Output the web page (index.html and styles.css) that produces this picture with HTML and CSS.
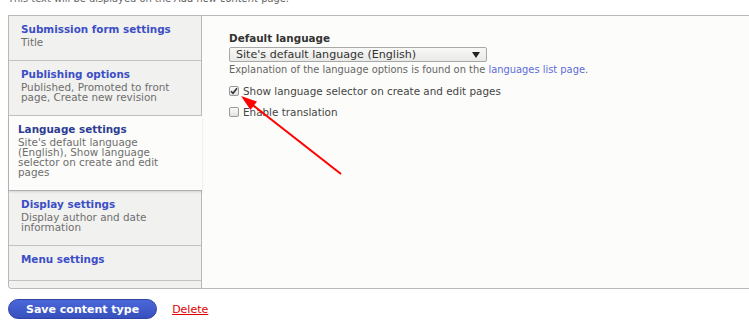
FILE: index.html
```html
<!DOCTYPE html>
<html lang="en">
<head>
    <meta charset="UTF-8">
    <meta name="viewport" content="width=device-width, initial-scale=1.0">
    <title>Edit content type</title>
    <link rel="stylesheet" href="styles.css">
</head>
<body>
    <p class="type-help">This text will be displayed on the <em>Add new content</em> page.</p>

    <!-- Vertical tabs -->
    <div class="vertical-tabs">
        <ul class="tab-list">
            <li class="tab">
                <a href="#"><strong>Submission form settings</strong><span class="summary">Title</span></a>
            </li>
            <li class="tab">
                <a href="#"><strong>Publishing options</strong><span class="summary">Published, Promoted to front page, Create new revision</span></a>
            </li>
            <li class="tab selected">
                <a href="#"><strong>Language settings</strong><span class="summary">Site's default language (English), Show language selector on create and edit pages</span></a>
            </li>
            <li class="tab">
                <a href="#"><strong>Display settings</strong><span class="summary">Display author and date information</span></a>
            </li>
            <li class="tab">
                <a href="#"><strong>Menu settings</strong></a>
            </li>
        </ul>

        <div class="tab-pane">
            <div class="field-label">Default language</div>
            <div class="select">
                <span>Site's default language (English)</span>
                <span class="select-arrow"></span>
            </div>
            <div class="description">Explanation of the language options is found on the <a href="#">languages list page</a>.</div>

            <div class="checkbox-row">
                <span class="check">
                    <svg width="8" height="8" viewBox="0 0 8 8"><path d="M1 4.2 L3 6.3 L7 1.2" fill="none" stroke="#333" stroke-width="1.6"/></svg>
                </span>
                <span>Show language selector on create and edit pages</span>
            </div>
            <div class="checkbox-row second">
                <span class="check"></span>
                <span>Enable translation</span>
            </div>
        </div>
    </div>

    <div class="actions">
        <button class="button-primary">Save content type</button>
        <a href="#" class="delete-link">Delete</a>
    </div>

    <!-- red annotation arrow drawn over the page -->
    <svg class="annotation" width="749" height="332" viewBox="0 0 749 332">
        <line x1="252" y1="104.5" x2="341" y2="174" stroke="#ff0000" stroke-width="2"/>
        <polygon points="241,96 257,101.5 250.5,110" fill="#ff0000"/>
    </svg>
</body>
</html>
```

FILE: styles.css
```css
body {
    margin: 0;
    padding: 0 8px;
    background-color: #fff;
    font-family: "DejaVu Sans", sans-serif;
    font-size: 10.4px;
    color: #333;
    position: relative;
    overflow: hidden;
    height: 332px;
}

.type-help {
    margin: -8px 0 9px 0;
    font-size: 9.9px;
    line-height: 14px;
    color: #666;
    white-space: nowrap;
}

/* Vertical tabs */
.vertical-tabs {
    display: flex;
    width: 770px;
    border: 1px solid #b8b8b8;
    border-right: none;
    border-bottom-left-radius: 4px;
}

.tab-list {
    list-style: none;
    margin: 0;
    padding: 0 0 7px 0;
    width: 192px;
    flex-shrink: 0;
    background-color: #f1f1ef;
    border-bottom-left-radius: 4px;
}

.tab {
    border-bottom: 1px solid #c2c2c0;
}

.tab a {
    display: block;
    padding: 5px 12px 13px 12px;
    text-decoration: none;
}

.tab strong {
    display: block;
    line-height: 16px;
    color: #3c4ec6;
}

.tab .summary {
    display: block;
    line-height: 10px;
    color: #6e6e6e;
}

.tab.selected {
    position: relative;
    margin-right: -1px;
    background-color: #fcfcfa;
    border-bottom-color: #b0b0b0;
    box-shadow: 0 1px 2px rgba(0, 0, 0, 0.12);
    z-index: 1;
}

.tab.selected a {
    padding-left: 9px;
    padding-right: 14px;
}

.tab.selected strong {
    color: #2d3c94;
}

.tab-pane {
    flex: 1;
    background-color: #fcfcfa;
    border-left: 1px solid #b8b8b8;
    padding: 15px 27px;
}

.field-label {
    font-weight: bold;
    line-height: 14px;
    color: #333;
}

.select {
    display: flex;
    justify-content: space-between;
    align-items: center;
    box-sizing: border-box;
    width: 258px;
    height: 15px;
    margin-top: 2px;
    padding: 0 6px;
    font-size: 11.1px;
    line-height: 13px;
    color: #333;
    border: 1px solid #a8a8a8;
    border-radius: 2px;
    background: linear-gradient(#f8f8f6, #e9e9e7);
}

.select-arrow {
    width: 0;
    height: 0;
    border-left: 4px solid transparent;
    border-right: 4px solid transparent;
    border-top: 6px solid #222;
}

.description {
    margin-top: 1px;
    font-size: 9.9px;
    line-height: 14px;
    color: #666;
}

.description a {
    color: #5d6cd8;
    text-decoration: none;
}

.checkbox-row {
    display: flex;
    align-items: center;
    margin-top: 7px;
    line-height: 14px;
    color: #444;
}

.checkbox-row.second {
    margin-top: 7px;
}

.check {
    display: flex;
    align-items: center;
    justify-content: center;
    box-sizing: border-box;
    width: 10px;
    height: 10px;
    margin-right: 4px;
    border: 1px solid #9a9a9a;
    border-radius: 2px;
    background: linear-gradient(#fafafa, #e2e2e2);
}

/* Form actions */
.actions {
    display: flex;
    align-items: baseline;
    margin-top: 10px;
}

.button-primary {
    height: 20px;
    padding: 0 17px;
    font-family: "DejaVu Sans", sans-serif;
    font-size: 11px;
    font-weight: bold;
    color: #fff;
    border: 1px solid #2f44a8;
    border-radius: 10px;
    background: linear-gradient(#4b67d8, #3750bd);
    cursor: pointer;
}

.delete-link {
    margin-left: 15px;
    font-size: 11px;
    color: #e00000;
}

.annotation {
    position: absolute;
    top: 0;
    left: 0;
    pointer-events: none;
}
```
